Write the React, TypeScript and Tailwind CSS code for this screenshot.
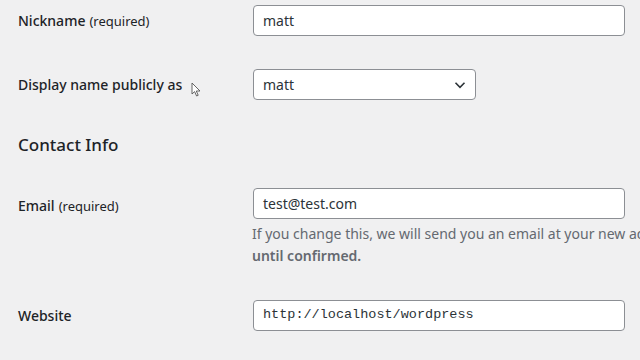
const font = { fontFamily: '"Noto Sans", "Open Sans", sans-serif' };

const Label = ({ text, note }: { text: string; note?: string }) => (
  <div className="w-[253px] shrink-0 pl-[18px] text-[14px] font-medium text-[#1d2327]">
    {text}
    {note && <span className="ml-1 text-[13px] font-normal">{note}</span>}
  </div>
);

const Cursor = () => (
  <svg width="11" height="15" viewBox="0 0 11 15" className="absolute left-[191px] top-[82px]">
    <path d="M1 1 L1 12 L3.6 9.6 L5.6 14 L7.2 13.3 L5.3 9 L9 9 Z" fill="#fff" stroke="#555" strokeWidth="0.9" strokeLinejoin="round" />
  </svg>
);

export default function App() {
  return (
    <div className="relative h-[360px] w-[640px] overflow-hidden bg-[#f0f0f1]" style={font}>
      <div className="flex items-center pt-[5px]">
        <Label text="Nickname" note="(required)" />
        <div className="flex h-[31px] w-[372px] items-center rounded-[4px] border border-[#8c8f94] bg-white px-[9px] text-[14px] text-[#2c3338]">
          matt
        </div>
      </div>

      <div className="mt-[33px] flex items-center">
        <Label text="Display name publicly as" />
        <div className="flex h-[31px] w-[223px] items-center justify-between rounded-[4px] border border-[#8c8f94] bg-white pl-[9px] pr-[8px] text-[14px] text-[#2c3338]">
          matt
          <svg width="14" height="14" viewBox="0 0 14 14">
            <path d="M2.5 4.8 L7 9.3 L11.5 4.8" fill="none" stroke="#2c3338" strokeWidth="1.6" />
          </svg>
        </div>
      </div>
      <Cursor />

      <h2 className="mt-[31px] pl-[18px] text-[17px] font-medium leading-[28px] text-[#1d2327]">Contact Info</h2>

      <div className="mt-[29px] flex items-start">
        <div className="pt-[7px]">
          <Label text="Email" note="(required)" />
        </div>
        <div className="flex min-w-0 flex-col">
          <div className="flex h-[31px] w-[372px] items-center rounded-[4px] border border-[#8c8f94] bg-white px-[9px] text-[14px] text-[#2c3338]">
            test@test.com
          </div>
          <p className="mt-[4px] -ml-[1px] whitespace-nowrap text-[14px] leading-[22px] text-[#646970]">
            If you change this, we will send you an email at your new address to confirm it.{" "}
            <strong className="font-semibold">The new address will not become active</strong>
            <br />
            <strong className="font-semibold">until confirmed.</strong>
          </p>
        </div>
      </div>

      <div className="mt-[33px] flex items-center">
        <Label text="Website" />
        <div
          className="flex h-[31px] w-[372px] items-center rounded-[4px] border border-[#8c8f94] bg-white px-[9px] text-[13.5px] text-[#2c3338]"
          style={{ fontFamily: '"Liberation Mono", "DejaVu Sans Mono", monospace' }}
        >
          http://localhost/wordpress
        </div>
      </div>
    </div>
  );
}
